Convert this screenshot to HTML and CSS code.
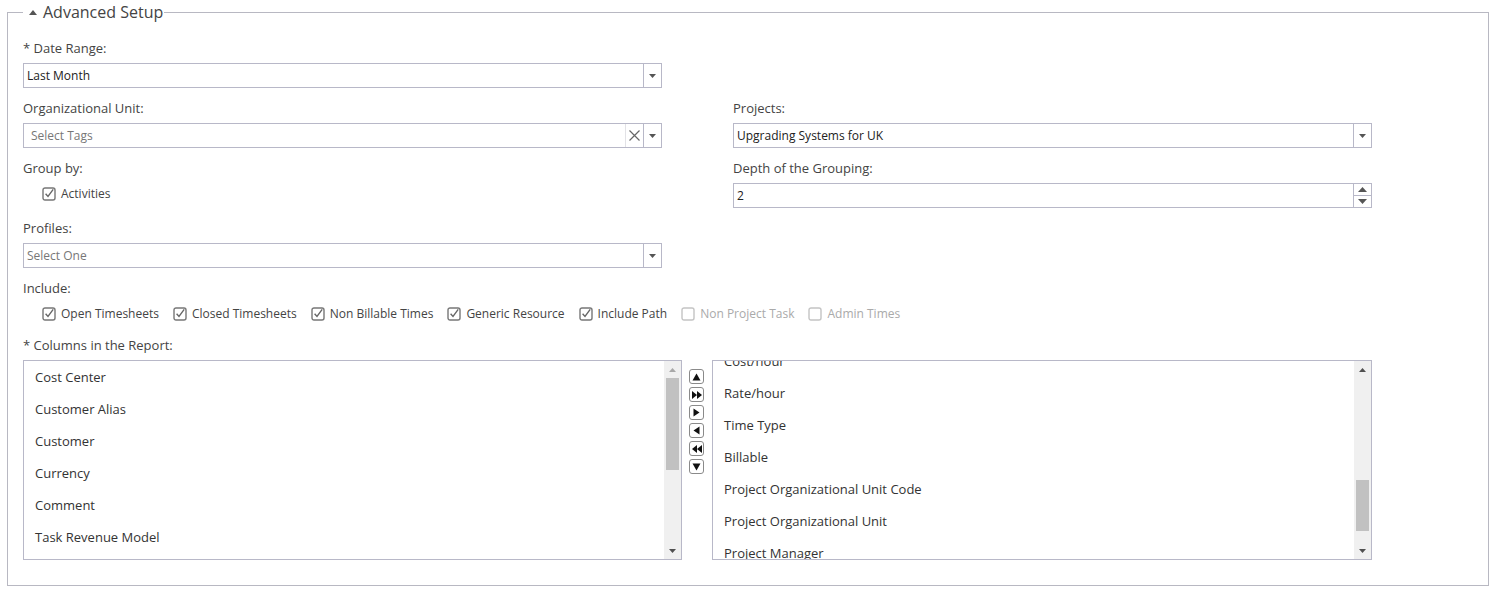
FILE: index.html
```html
<!DOCTYPE html>
<html>
<head>
    <title>Advanced Setup</title>
    <link rel="stylesheet" href="styles.css">
</head>
<body>
    <fieldset class="setup">
        <legend class="setup-legend">
            <svg class="caret" width="8" height="5" viewBox="0 0 8 5"><path d="M0 5L4 0L8 5z" fill="#555"/></svg>Advanced Setup
        </legend>

        <div class="form-grid">
            <div class="field">
                <div class="field-label">* Date Range:</div>
                <div class="select">
                    <span class="select-value">Last Month</span>
                    <span class="select-btn"><svg width="7" height="4" viewBox="0 0 7 4"><path d="M0 0H7L3.5 4z" fill="#555"/></svg></span>
                </div>
            </div>
            <div class="field"></div>

            <div class="field">
                <div class="field-label">Organizational Unit:</div>
                <div class="select">
                    <span class="select-value tags placeholder">Select Tags</span>
                    <span class="select-clear"><svg width="11" height="11" viewBox="0 0 11 11"><path d="M0.5 0.5L10.5 10.5M10.5 0.5L0.5 10.5" stroke="#666" stroke-width="1.2"/></svg></span>
                    <span class="select-btn"><svg width="7" height="4" viewBox="0 0 7 4"><path d="M0 0H7L3.5 4z" fill="#555"/></svg></span>
                </div>
            </div>
            <div class="field">
                <div class="field-label">Projects:</div>
                <div class="select">
                    <span class="select-value">Upgrading Systems for UK</span>
                    <span class="select-btn"><svg width="7" height="4" viewBox="0 0 7 4"><path d="M0 0H7L3.5 4z" fill="#555"/></svg></span>
                </div>
            </div>

            <div class="field">
                <div class="field-label">Group by:</div>
                <div class="check-row">
                    <label class="check">
                        <svg width="14" height="14" viewBox="0 0 14 14"><rect x="1" y="1" width="12" height="12" rx="2" fill="none" stroke="#777" stroke-width="1.4"/><path d="M3.6 6.8L6 9.4L11.2 2.4" fill="none" stroke="#666" stroke-width="1.4"/></svg>
                        Activities
                    </label>
                </div>
            </div>
            <div class="field">
                <div class="field-label">Depth of the Grouping:</div>
                <div class="select">
                    <span class="select-value">2</span>
                    <span class="spinner">
                        <span class="spin-half"><svg width="9" height="5" viewBox="0 0 9 5"><path d="M0 5L4.5 0L9 5z" fill="#555"/></svg></span>
                        <span class="spin-half"><svg width="9" height="5" viewBox="0 0 9 5"><path d="M0 0H9L4.5 5z" fill="#555"/></svg></span>
                    </span>
                </div>
            </div>

            <div class="field">
                <div class="field-label">Profiles:</div>
                <div class="select">
                    <span class="select-value placeholder">Select One</span>
                    <span class="select-btn"><svg width="7" height="4" viewBox="0 0 7 4"><path d="M0 0H7L3.5 4z" fill="#555"/></svg></span>
                </div>
            </div>
            <div class="field"></div>

            <div class="field wide">
                <div class="field-label">Include:</div>
                <div class="check-row">
                    <label class="check">
                        <svg width="14" height="14" viewBox="0 0 14 14"><rect x="1" y="1" width="12" height="12" rx="2" fill="none" stroke="#777" stroke-width="1.4"/><path d="M3.6 6.8L6 9.4L11.2 2.4" fill="none" stroke="#666" stroke-width="1.4"/></svg>
                        Open Timesheets
                    </label>
                    <label class="check">
                        <svg width="14" height="14" viewBox="0 0 14 14"><rect x="1" y="1" width="12" height="12" rx="2" fill="none" stroke="#777" stroke-width="1.4"/><path d="M3.6 6.8L6 9.4L11.2 2.4" fill="none" stroke="#666" stroke-width="1.4"/></svg>
                        Closed Timesheets
                    </label>
                    <label class="check">
                        <svg width="14" height="14" viewBox="0 0 14 14"><rect x="1" y="1" width="12" height="12" rx="2" fill="none" stroke="#777" stroke-width="1.4"/><path d="M3.6 6.8L6 9.4L11.2 2.4" fill="none" stroke="#666" stroke-width="1.4"/></svg>
                        Non Billable Times
                    </label>
                    <label class="check">
                        <svg width="14" height="14" viewBox="0 0 14 14"><rect x="1" y="1" width="12" height="12" rx="2" fill="none" stroke="#777" stroke-width="1.4"/><path d="M3.6 6.8L6 9.4L11.2 2.4" fill="none" stroke="#666" stroke-width="1.4"/></svg>
                        Generic Resource
                    </label>
                    <label class="check">
                        <svg width="14" height="14" viewBox="0 0 14 14"><rect x="1" y="1" width="12" height="12" rx="2" fill="none" stroke="#777" stroke-width="1.4"/><path d="M3.6 6.8L6 9.4L11.2 2.4" fill="none" stroke="#666" stroke-width="1.4"/></svg>
                        Include Path
                    </label>
                    <label class="check disabled">
                        <svg width="14" height="14" viewBox="0 0 14 14"><rect x="1" y="1" width="12" height="12" rx="2" fill="none" stroke="#c4c4c4" stroke-width="1.4"/></svg>
                        Non Project Task
                    </label>
                    <label class="check disabled">
                        <svg width="14" height="14" viewBox="0 0 14 14"><rect x="1" y="1" width="12" height="12" rx="2" fill="none" stroke="#c4c4c4" stroke-width="1.4"/></svg>
                        Admin Times
                    </label>
                </div>
            </div>

            <div class="field wide columns-field">
                <div class="field-label">* Columns in the Report:</div>
                <div class="columns-picker">
                    <div class="listbox">
                        <div class="listbox-items">
                            <div class="list-item">Cost Center</div>
                            <div class="list-item">Customer Alias</div>
                            <div class="list-item">Customer</div>
                            <div class="list-item">Currency</div>
                            <div class="list-item">Comment</div>
                            <div class="list-item">Task Revenue Model</div>
                            <div class="list-item">Task Type</div>
                        </div>
                        <div class="scrollbar">
                            <span class="scroll-arrow"><svg width="7" height="4" viewBox="0 0 7 4"><path d="M0 4L3.5 0L7 4z" fill="#a8a8a8"/></svg></span>
                            <span class="scroll-track"><span class="scroll-thumb thumb-left"></span></span>
                            <span class="scroll-arrow"><svg width="7" height="4" viewBox="0 0 7 4"><path d="M0 0H7L3.5 4z" fill="#505050"/></svg></span>
                        </div>
                    </div>

                    <div class="move-buttons">
                        <button class="move-btn"><svg width="9" height="8" viewBox="0 0 9 8"><path d="M0.5 7.5L4.5 0.5L8.5 7.5z" fill="#111"/></svg></button>
                        <button class="move-btn"><svg width="10" height="8" viewBox="0 0 10 8"><path d="M0 0L5 4L0 8zM5 0L10 4L5 8z" fill="#111"/></svg></button>
                        <button class="move-btn"><svg width="7" height="9" viewBox="0 0 7 9"><path d="M0.5 0.5L6.5 4.5L0.5 8.5z" fill="#111"/></svg></button>
                        <button class="move-btn"><svg width="7" height="9" viewBox="0 0 7 9"><path d="M6.5 0.5L0.5 4.5L6.5 8.5z" fill="#111"/></svg></button>
                        <button class="move-btn"><svg width="10" height="8" viewBox="0 0 10 8"><path d="M10 0L5 4L10 8zM5 0L0 4L5 8z" fill="#111"/></svg></button>
                        <button class="move-btn"><svg width="9" height="8" viewBox="0 0 9 8"><path d="M0.5 0.5H8.5L4.5 7.5z" fill="#111"/></svg></button>
                    </div>

                    <div class="listbox">
                        <div class="listbox-items scrolled">
                            <div class="list-item">Cost/hour</div>
                            <div class="list-item">Rate/hour</div>
                            <div class="list-item">Time Type</div>
                            <div class="list-item">Billable</div>
                            <div class="list-item">Project Organizational Unit Code</div>
                            <div class="list-item">Project Organizational Unit</div>
                            <div class="list-item">Project Manager</div>
                        </div>
                        <div class="scrollbar">
                            <span class="scroll-arrow"><svg width="7" height="4" viewBox="0 0 7 4"><path d="M0 4L3.5 0L7 4z" fill="#505050"/></svg></span>
                            <span class="scroll-track"><span class="scroll-thumb thumb-right"></span></span>
                            <span class="scroll-arrow"><svg width="7" height="4" viewBox="0 0 7 4"><path d="M0 0H7L3.5 4z" fill="#505050"/></svg></span>
                        </div>
                    </div>
                </div>
            </div>
        </div>
    </fieldset>
</body>
</html>
```

FILE: styles.css
```css
body {
    margin: 0;
    background-color: #fff;
    font-family: "Open Sans", "Liberation Sans", sans-serif;
    color: #444;
}

.setup {
    margin: 1px 7px 0;
    padding: 16px 15px 25px;
    border: 1px solid #b8b8c2;
}

.setup-legend {
    padding: 0 1px 0 2px;
    font-size: 16px;
    line-height: 22px;
    color: #444;
}

.caret {
    margin: 0 6px 3px 4px;
    vertical-align: middle;
}

.form-grid {
    display: grid;
    grid-template-columns: 639px 639px;
    column-gap: 71px;
    row-gap: 11px;
}

.field.wide {
    grid-column: 1 / 3;
}

.columns-field {
    margin-top: -3px;
}

.field-label {
    font-size: 13px;
    line-height: 18px;
    margin-bottom: 6px;
    color: #444;
}

.select {
    display: flex;
    height: 25px;
    box-sizing: border-box;
    border: 1px solid #b8b8c8;
    background-color: #fff;
}

.select-value {
    flex: 1;
    padding-left: 3px;
    font-size: 12px;
    line-height: 23px;
    color: #222;
}

.select-value.tags {
    padding-left: 7px;
}

.select-value.placeholder {
    color: #777;
}

.select-btn,
.select-clear {
    display: flex;
    align-items: center;
    justify-content: center;
    width: 17px;
    border-left: 1px solid #b8b8c8;
}

.select-clear {
    border-left-color: #e2e2e6;
}

.spinner {
    display: flex;
    flex-direction: column;
    width: 17px;
    border-left: 1px solid #b8b8c8;
}

.spin-half {
    flex: 1;
    display: flex;
    align-items: center;
    justify-content: center;
}

.spin-half + .spin-half {
    border-top: 1px solid #b8b8c8;
}

.check-row {
    display: flex;
    align-items: center;
    height: 25px;
    box-sizing: border-box;
    padding: 0 0 4px 19px;
    gap: 14px;
}

.check {
    display: flex;
    align-items: center;
    gap: 5px;
    font-size: 12px;
    color: #444;
}

.check.disabled {
    color: #aaa;
}

.columns-picker {
    display: grid;
    grid-template-columns: 659px 30px 660px;
}

.listbox {
    display: flex;
    height: 200px;
    box-sizing: border-box;
    border: 1px solid #b8b8c8;
    overflow: hidden;
}

.listbox-items {
    flex: 1;
    overflow: hidden;
}

.listbox-items.scrolled .list-item:first-child {
    margin-top: -16px;
}

.list-item {
    height: 32px;
    line-height: 32px;
    padding-left: 11px;
    font-size: 13px;
    color: #333;
    white-space: nowrap;
}

.scrollbar {
    display: flex;
    flex-direction: column;
    width: 17px;
    background-color: #f0f0f0;
}

.scroll-arrow {
    display: flex;
    align-items: center;
    justify-content: center;
    height: 17px;
}

.scroll-track {
    flex: 1;
}

.scroll-thumb {
    display: block;
    margin: 0 2px;
    background-color: #c1c1c1;
}

.thumb-left {
    height: 92px;
}

.thumb-right {
    margin-top: 102px;
    height: 51px;
}

.move-buttons {
    display: flex;
    flex-direction: column;
    gap: 3px;
    padding: 9px 0 0 7px;
}

.move-btn {
    display: flex;
    align-items: center;
    justify-content: center;
    width: 15px;
    height: 15px;
    padding: 0;
    border: 1px solid #8a8a8a;
    border-radius: 3px;
    background-color: #fff;
}
```
